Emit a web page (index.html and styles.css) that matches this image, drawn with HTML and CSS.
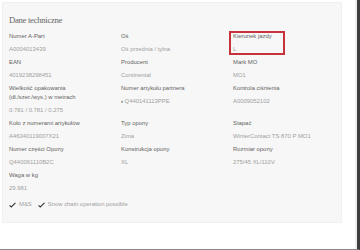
FILE: index.html
```html
<!DOCTYPE html>
<html lang="pl">
<head>
<meta charset="utf-8">
<title>Dane techniczne</title>
<link rel="stylesheet" href="styles.css">
</head>
<body>
<div class="frame">
  <section class="panel">
    <h2 class="title">Dane techniczne</h2>
    <div class="grid">
      <div class="cell"><div class="label">Numer A-Part</div><div class="value">A0004013439</div></div>
      <div class="cell"><div class="label">Oś</div><div class="value">Oś przednia / tylna</div></div>
      <div class="cell highlight"><div class="label">Kierunek jazdy</div><div class="value">L</div></div>

      <div class="cell"><div class="label">EAN</div><div class="value">4019238298451</div></div>
      <div class="cell"><div class="label">Producent</div><div class="value">Continental</div></div>
      <div class="cell"><div class="label">Mark MO</div><div class="value">MO1</div></div>

      <div class="cell"><div class="label">Wielkość opakowania<br>(dł./szer./wys.) w metrach</div><div class="value">0.781 / 0.781 / 0.275</div></div>
      <div class="cell"><div class="label">Numer artykułu partnera</div><div class="value"><span class="chev">›</span> Q440141113PPE</div></div>
      <div class="cell"><div class="label">Kontrola ciśnienia</div><div class="value">A0009052102</div></div>

      <div class="cell"><div class="label">Koło z numerami artykułów</div><div class="value">A46340119007X21</div></div>
      <div class="cell"><div class="label">Typ opony</div><div class="value">Zima</div></div>
      <div class="cell"><div class="label">Stapać</div><div class="value">WinterContact TS 870 P MO1</div></div>

      <div class="cell"><div class="label">Numer części Opony</div><div class="value">Q440061110B2C</div></div>
      <div class="cell"><div class="label">Konstrukcja opony</div><div class="value">XL</div></div>
      <div class="cell"><div class="label">Rozmiar opony</div><div class="value">275/45 XL/110V</div></div>

      <div class="cell"><div class="label">Waga w kg</div><div class="value">29.981</div></div>
    </div>
    <ul class="features">
      <li class="feature"><svg class="check" viewBox="0 0 8 6" width="7" height="6"><path d="M0.6 3.4 L2.6 5.2 L7.4 0.6" fill="none" stroke="#333" stroke-width="1.2"/></svg>M&amp;S</li>
      <li class="feature"><svg class="check" viewBox="0 0 8 6" width="7" height="6"><path d="M0.6 3.4 L2.6 5.2 L7.4 0.6" fill="none" stroke="#333" stroke-width="1.2"/></svg>Snow chain operation possible</li>
    </ul>
  </section>
</div>
</body>
</html>
```
FILE: styles.css
```css
html, body {
  margin: 0;
  padding: 0;
  background: #ffffff;
}

.frame {
  box-sizing: border-box;
  width: 360px;
  height: 250px;
  padding: 2px 15px 0 2px;
  border-right: 3px solid #3d3d3d;
  border-bottom: 1px solid #8a8a8a;
  box-shadow: inset -2px 0 0 #efefef;
  font-family: "Liberation Sans", Arial, sans-serif;
}

.panel {
  box-sizing: border-box;
  width: 340px;
  height: 221px;
  background: #f7f7f7;
  border: 1px solid #f0f0f0;
  padding: 11px 6px 0 6px;
}

.title {
  margin: 0 0 6px 0;
  font-family: "Liberation Serif", "Times New Roman", serif;
  font-weight: normal;
  font-size: 8.7px;
  line-height: 12px;
  letter-spacing: -0.3px;
  color: #666666;
}

.grid {
  display: grid;
  grid-template-columns: 112px 112px 1fr;
  row-gap: 4px;
}

.cell {
  position: relative;
  font-size: 5.9px;
  line-height: 9px;
}

.label {
  color: #646464;
  margin-bottom: 4px;
}

.value {
  color: #a0a0a0;
}

.chev {
  color: #444444;
  font-weight: bold;
}

.highlight::after {
  content: "";
  position: absolute;
  left: -4px;
  top: -1px;
  width: 56px;
  height: 24px;
  box-sizing: border-box;
  border: 2px solid #c8333b;
}

.features {
  list-style: none;
  margin: 7px 0 0 0;
  padding: 0;
  display: flex;
  gap: 6px;
  font-size: 5.9px;
  line-height: 9px;
  color: #a0a0a0;
}

.feature {
  display: flex;
  align-items: center;
  gap: 3px;
}

.check {
  display: block;
}
```
